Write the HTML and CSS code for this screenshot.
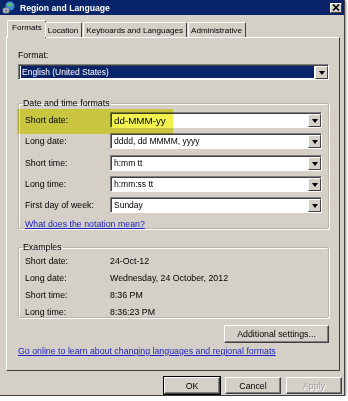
FILE: index.html
```html
<!DOCTYPE html>
<html lang="en">
<head>
  <meta charset="UTF-8" />
  <title>Region and Language</title>
  <link rel="stylesheet" href="styles.css">
</head>
<body>
  <div class="window">
    <div class="titlebar">
      <svg class="app-icon" width="14" height="13" viewBox="0 0 14 13">
        <circle cx="8" cy="5" r="4.5" fill="#3a8fd8"/>
        <path d="M5 3 Q8 1 11 4 Q9 6 6 5 Z" fill="#6cc04a"/>
        <rect x="1" y="7" width="6" height="5" rx="1" fill="#c8c8c8" stroke="#707070" stroke-width="0.8"/>
        <rect x="2.5" y="8.5" width="3" height="2" fill="#5a7fb0"/>
      </svg>
      <span class="title">Region and Language</span>
      <span class="close-btn">
        <svg width="8" height="7" viewBox="0 0 8 7"><path d="M1 0.5 L7 6.5 M7 0.5 L1 6.5" stroke="#000" stroke-width="1.6"/></svg>
      </span>
    </div>

    <div class="tabs">
      <div class="tab active">Formats</div>
      <div class="tab">Location</div>
      <div class="tab">Keyboards and Languages</div>
      <div class="tab">Administrative</div>
    </div>

    <div class="panel">
      <div class="format-label">Format:</div>
      <div class="combo combo-selected">
        <span class="combo-text">English (United States)</span>
        <span class="drop-btn"><i class="arrow"></i></span>
      </div>

      <fieldset class="group group-formats">
        <legend>Date and time formats</legend>
        <div class="highlight"></div>
        <div class="row">
          <span class="row-label">Short date:</span>
          <div class="combo"><span class="combo-text big">dd-MMM-yy</span><span class="drop-btn"><i class="arrow"></i></span></div>
        </div>
        <div class="row">
          <span class="row-label">Long date:</span>
          <div class="combo"><span class="combo-text">dddd, dd MMMM, yyyy</span><span class="drop-btn"><i class="arrow"></i></span></div>
        </div>
        <div class="row">
          <span class="row-label">Short time:</span>
          <div class="combo"><span class="combo-text">h:mm tt</span><span class="drop-btn"><i class="arrow"></i></span></div>
        </div>
        <div class="row">
          <span class="row-label">Long time:</span>
          <div class="combo"><span class="combo-text">h:mm:ss tt</span><span class="drop-btn"><i class="arrow"></i></span></div>
        </div>
        <div class="row">
          <span class="row-label">First day of week:</span>
          <div class="combo"><span class="combo-text">Sunday</span><span class="drop-btn"><i class="arrow"></i></span></div>
        </div>
        <a class="link notation" href="#">What does the notation mean?</a>
      </fieldset>

      <fieldset class="group group-examples">
        <legend>Examples</legend>
        <div class="ex-row"><span class="row-label">Short date:</span><span>24-Oct-12</span></div>
        <div class="ex-row"><span class="row-label">Long date:</span><span>Wednesday, 24 October, 2012</span></div>
        <div class="ex-row"><span class="row-label">Short time:</span><span>8:36 PM</span></div>
        <div class="ex-row"><span class="row-label">Long time:</span><span>8:36:23 PM</span></div>
      </fieldset>

      <div class="settings-line">
        <button class="btn btn-settings">Additional settings...</button>
      </div>

      <a class="link online" href="#">Go online to learn about changing languages and regional formats</a>
    </div>

    <div class="footer">
      <button class="btn btn-ok">OK</button>
      <button class="btn">Cancel</button>
      <button class="btn btn-disabled">Apply</button>
    </div>
  </div>
</body>
</html>
```

FILE: styles.css
```css
body {
  margin: 0;
  background: #ffffff;
  font-family: 'Liberation Sans', Arial, sans-serif;
  font-size: 8.8px;
  color: #000;
}

.window {
  position: relative;
  width: 345px;
  height: 396px;
  background: #d4d0c8;
  border-right: 1px solid #404040;
  border-bottom: 1px solid #404040;
  box-shadow: 1px 1px 2px rgba(0,0,0,0.45);
  box-sizing: border-box;
}

/* Title bar */
.titlebar {
  height: 15px;
  background: #0a246a;
  display: flex;
  align-items: center;
  padding: 0 2px 0 2px;
}

.app-icon {
  margin-right: 4px;
}

.title {
  color: #fff;
  font-weight: bold;
  font-size: 8.6px;
  flex: 1;
}

.close-btn {
  width: 12px;
  height: 10px;
  background: #d4d0c8;
  border-top: 1px solid #fff;
  border-left: 1px solid #fff;
  border-right: 1px solid #404040;
  border-bottom: 1px solid #404040;
  display: flex;
  align-items: center;
  justify-content: center;
  box-sizing: border-box;
}

/* Tabs */
.tabs {
  display: flex;
  align-items: flex-end;
  padding: 5px 0 0 9px;
  height: 22px;
  box-sizing: border-box;
  position: relative;
  z-index: 1;
  font-size: 8.1px;
}

.tab {
  height: 15px;
  padding: 0 3px 0 2px;
  display: flex;
  align-items: center;
  border-top: 1px solid #fff;
  border-left: 1px solid #fff;
  border-right: 1px solid #404040;
  border-radius: 2px 2px 0 0;
  margin-right: 1px;
  box-sizing: border-box;
}

.tab.active {
  height: 18px;
  margin-left: -2px;
  margin-right: -1px;
  padding: 2px 3px 0 4px;
  background: #d4d0c8;
  margin-bottom: -1px;
  align-items: flex-start;
}

/* Panel */
.panel {
  margin: 0 4px 0 6px;
  height: 334px;
  border-top: 1px solid #fff;
  border-left: 1px solid #fff;
  border-right: 1px solid #404040;
  border-bottom: 1px solid #404040;
  box-sizing: border-box;
  padding: 11px 10px 0 11px;
}

.format-label {
  height: 12px;
  line-height: 12px;
  margin-bottom: 3px;
}

/* Combo box */
.combo {
  height: 16px;
  background: #fff;
  display: flex;
  align-items: stretch;
  border-top: 1px solid #808080;
  border-left: 1px solid #808080;
  border-right: 1px solid #fff;
  border-bottom: 1px solid #fff;
  box-shadow: inset 1px 1px 0 #404040;
  box-sizing: border-box;
}

.combo-text {
  flex: 1;
  padding-left: 3px;
  display: flex;
  align-items: center;
  font-size: 8.5px;
}

.combo-text.big {
  font-size: 9.8px;
}

.combo-selected .combo-text {
  background: #0a246a;
  color: #fff;
  margin: 1px 1px 1px 2px;
  padding-left: 1px;
}

.drop-btn {
  width: 13px;
  background: #d4d0c8;
  border-top: 1px solid #fff;
  border-left: 1px solid #fff;
  border-right: 1px solid #404040;
  border-bottom: 1px solid #404040;
  margin: 1px 0 0 0;
  box-sizing: border-box;
  display: flex;
  align-items: center;
  justify-content: center;
}

.arrow {
  width: 0;
  height: 0;
  border-left: 3.5px solid transparent;
  border-right: 3.5px solid transparent;
  border-top: 4px solid #000;
  margin-top: 1px;
}

/* Group boxes */
.group {
  position: relative;
  margin: 0;
  border: 1px solid #b8b4ac;
  box-shadow: 1px 1px 0 #fff, inset 1px 1px 0 #fff;
  padding: 0 6px 0 6px;
  border-radius: 2px;
}

.group legend {
  padding: 0 1px;
  margin-left: -3px;
  color: #000;
  line-height: 10px;
}

.group-formats {
  margin-top: 18px;
  height: 131px;
  padding-top: 4px;
  box-sizing: border-box;
}

.highlight {
  position: absolute;
  left: -2px;
  top: 1px;
  width: 156px;
  height: 25px;
  background: #f0f030;
  mix-blend-mode: multiply;
  opacity: 0.85;
  z-index: 2;
  pointer-events: none;
}

.row {
  display: flex;
  align-items: center;
  height: 16px;
  margin-bottom: 5.25px;
}

.row-label {
  width: 85px;
  flex-shrink: 0;
}

.row .combo {
  flex: 1;
}

.link {
  color: #2020c0;
  text-decoration: underline;
}

.notation {
  display: block;
  margin-top: 3px;
  line-height: 12px;
}

.group-examples {
  margin-top: 13px;
  height: 76px;
  box-sizing: border-box;
  padding-top: 0;
}

.ex-row {
  display: flex;
  align-items: center;
  height: 17px;
}

.settings-line {
  display: flex;
  justify-content: flex-end;
  padding-top: 7px;
}

/* Buttons */
.btn {
  font-family: 'Liberation Sans', Arial, sans-serif;
  font-size: 8.8px;
  height: 18px;
  background: #d4d0c8;
  border-top: 1px solid #fff;
  border-left: 1px solid #fff;
  border-right: 1px solid #404040;
  border-bottom: 1px solid #404040;
  box-shadow: inset -1px -1px 0 #808080;
  padding: 0;
  color: #000;
}

.btn-settings {
  width: 105px;
}

.online {
  display: block;
  margin-top: 2px;
  line-height: 12px;
}

.footer {
  display: flex;
  justify-content: flex-end;
  gap: 5px;
  padding: 6px 2px 0 0;
}

.footer .btn {
  width: 56px;
  height: 17px;
}

.btn-ok {
  outline: 1px solid #000;
  outline-offset: 0;
}

.btn-disabled {
  color: #a0a0a0;
  text-shadow: 1px 1px 0 #fff;
}
```
